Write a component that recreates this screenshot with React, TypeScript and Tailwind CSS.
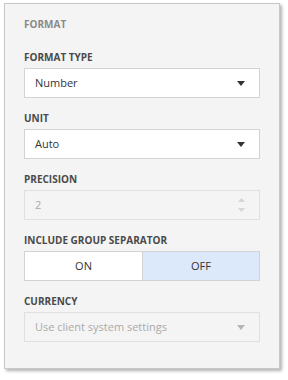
function Caret({ muted = false }: { muted?: boolean }) {
  return (
    <svg width="8" height="5" viewBox="0 0 8 5" className="shrink-0">
      <path d="M0 0h8L4 5z" fill={muted ? "#b5b5b5" : "#333333"} />
    </svg>
  );
}

function Label({ children }: { children: string }) {
  return (
    <div className="text-[10px] leading-4 font-bold uppercase text-[#4a4a4a]">{children}</div>
  );
}

function SelectBox({ value }: { value: string }) {
  return (
    <div className="mt-[3px] flex h-[30px] items-center justify-between border border-[#d3d3d3] bg-white pl-[10px] pr-[14px] text-[11px] text-[#333]">
      <span>{value}</span>
      <Caret />
    </div>
  );
}

export default function App() {
  return (
    <div
      className="h-[380px] w-[288px] bg-white pl-[4px] pt-[3px]"
      style={{ fontFamily: "'Segoe UI', 'Open Sans', sans-serif" }}
    >
      <div className="w-[276px] border border-[#c8c8c8] bg-[#f4f4f4] px-[19px] pt-[12px] pb-[26px] shadow-[2px_2px_3px_rgba(0,0,0,0.3)]">
        <div className="text-[10px] leading-4 font-bold uppercase text-[#8a8a8a]">Format</div>

        <div className="mt-[17px]">
          <Label>Format Type</Label>
          <SelectBox value="Number" />
        </div>

        <div className="mt-[12px]">
          <Label>Unit</Label>
          <SelectBox value="Auto" />
        </div>

        <div className="mt-[12px]">
          <Label>Precision</Label>
          <div className="mt-[3px] flex h-[30px] items-center justify-between border border-[#e0e0e0] bg-[#f4f4f4] pl-[10px] pr-[14px] text-[11px] text-[#aaa]">
            <span>2</span>
            <div className="flex flex-col items-center gap-[6px]">
              <svg width="7" height="4" viewBox="0 0 7 4">
                <path d="M0 4h7L3.5 0z" fill="#d5d5d5" />
              </svg>
              <svg width="7" height="4" viewBox="0 0 7 4">
                <path d="M0 0h7L3.5 4z" fill="#d5d5d5" />
              </svg>
            </div>
          </div>
        </div>

        <div className="mt-[12px]">
          <Label>Include Group Separator</Label>
          <div className="mt-[3px] grid h-[30px] grid-cols-2 border border-[#d3d3d3] text-[11px] text-[#333]">
            <div className="flex items-center justify-center bg-white">ON</div>
            <div className="flex items-center justify-center border-l border-[#d3d3d3] bg-[#dce9fa]">OFF</div>
          </div>
        </div>

        <div className="mt-[12px]">
          <Label>Currency</Label>
          <div className="mt-[3px] flex h-[30px] items-center justify-between border border-[#e0e0e0] bg-[#f4f4f4] pl-[10px] pr-[14px] text-[11px] text-[#aaa]">
            <span>Use client system settings</span>
            <Caret muted />
          </div>
        </div>
      </div>
    </div>
  );
}
